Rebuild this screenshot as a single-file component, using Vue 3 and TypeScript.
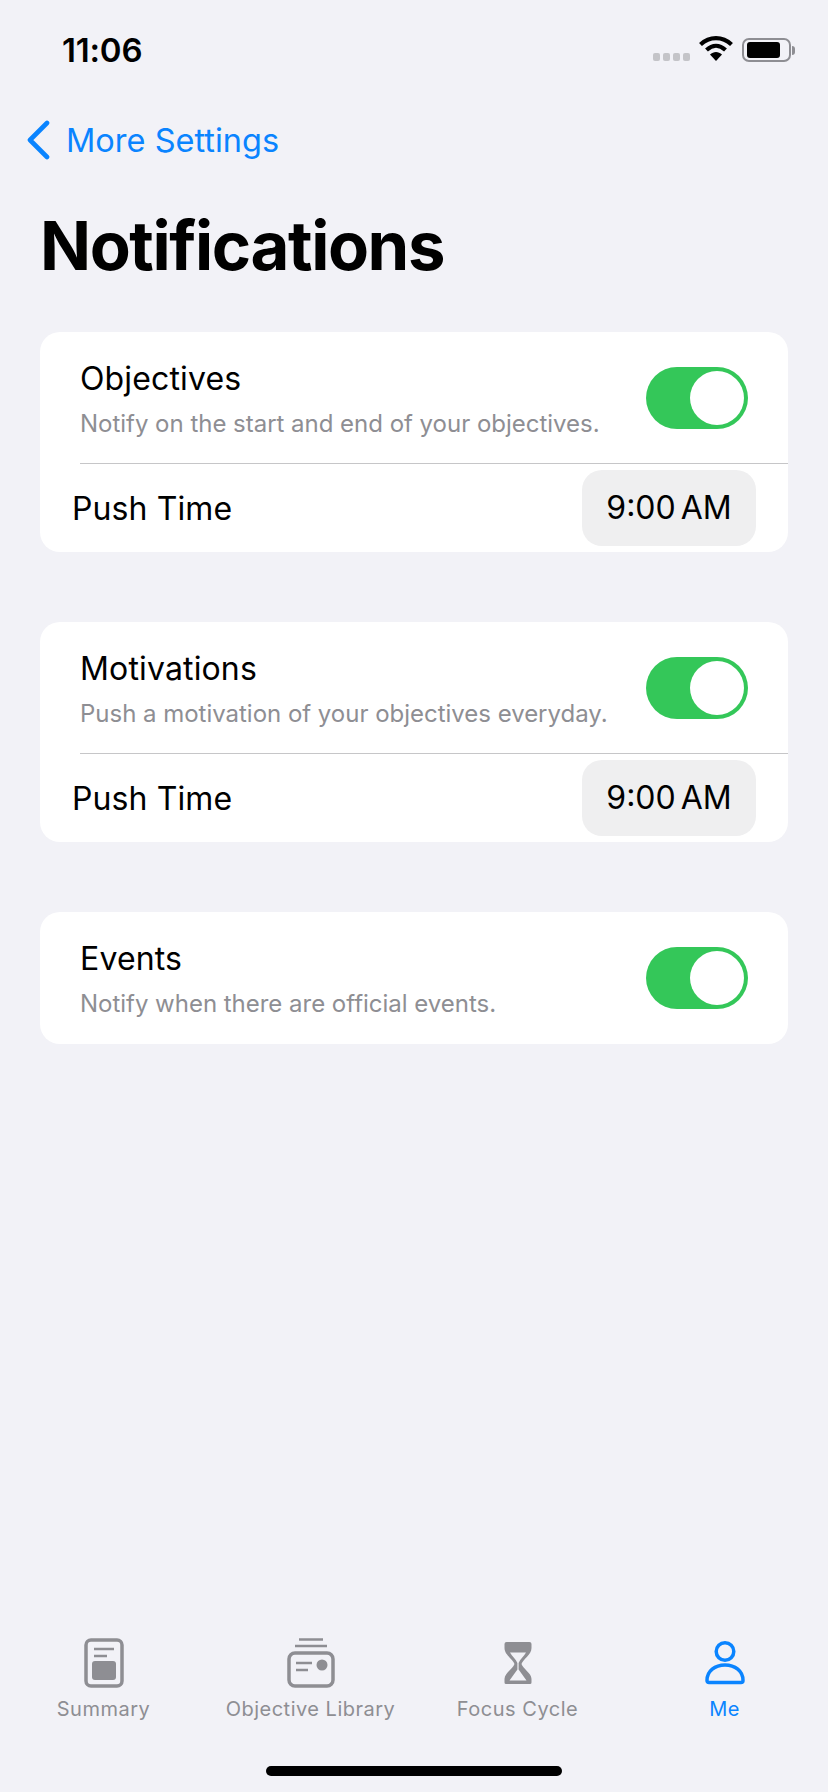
<template>
  <div class="page">
    <div class="status-bar">
      <span class="clock">11:06</span>
      <div class="status-icons">
        <div class="signal"><i v-for="n in 4" :key="n"></i></div>
        <svg class="wifi" width="34" height="26" viewBox="0 0 34 26">
          <path d="M1.5 9.5C10.5 1 23.500 1 32.500 9.500" fill="none" stroke="#000" stroke-width="4.200" />
          <path d="M7.500 15C13.500 9.500 20.500 9.500 26.500 15" fill="none" stroke="#000" stroke-width="4.200" />
          <path d="M11 19.500C14.500 16 19.500 16 23 19.500L17 26Z" fill="#000" />
        </svg>
        <div class="battery"><div class="battery-level"></div></div>
        <div class="battery-cap"></div>
      </div>
    </div>

    <nav class="nav-row">
      <svg width="26" height="40" viewBox="0 0 26 40">
        <path d="M22 3L5 20L22 37" fill="none" stroke="#0a84ff" stroke-width="4.600" stroke-linecap="round" stroke-linejoin="round" />
      </svg>
      <span class="back-label">More Settings</span>
    </nav>

    <h1 class="title">Notifications</h1>

    <section v-for="item in sections" :key="item.id" class="card">
      <div class="toggle-row">
        <div class="toggle-copy">
          <div class="row-title">{{ item.title }}</div>
          <div class="row-sub">{{ item.sub }}</div>
        </div>
        <div class="switch"><div class="knob"></div></div>
      </div>
      <template v-if="item.time">
        <div class="divider"></div>
        <div class="time-row">
          <span class="time-label">Push Time</span>
          <span class="time-pill">9:00 AM</span>
        </div>
      </template>
    </section>

    <footer class="tabs">
      <div class="tab">
        <svg width="40" height="50" viewBox="0 0 40 50">
          <rect x="2" y="2" width="36" height="46" rx="5" fill="none" stroke="#8e8e93" stroke-width="3.500" />
          <path d="M10 11H30" stroke="#8e8e93" stroke-width="2.500" />
          <path d="M10 18H23" stroke="#8e8e93" stroke-width="2.500" />
          <rect x="8" y="23" width="24" height="19" rx="3" fill="#8e8e93" />
        </svg>
        <span>Summary</span>
      </div>
      <div class="tab">
        <svg width="48" height="50" viewBox="0 0 48 50">
          <path d="M12 1.500H36" stroke="#8e8e93" stroke-width="2.500" />
          <path d="M8 8H40" stroke="#8e8e93" stroke-width="2.500" />
          <rect x="2" y="15" width="44" height="33" rx="6" fill="none" stroke="#8e8e93" stroke-width="3.500" />
          <path d="M9 25H25" stroke="#8e8e93" stroke-width="2.500" />
          <path d="M9 32H21" stroke="#8e8e93" stroke-width="2.500" />
          <circle cx="35" cy="27" r="5.500" fill="#8e8e93" />
        </svg>
        <span>Objective Library</span>
      </div>
      <div class="tab">
        <svg width="28" height="50" viewBox="0 0 28 50">
          <path fill-rule="evenodd" fill="#8e8e93" d="M0.500 6Q0.500 4 2.500 4H25.500Q27.500 4 27.500 6V10C27.500 17 19 21 17.500 26C19 31 27.500 35 27.500 41V44.500Q27.500 46 26 46H2Q0.500 46 0.500 44.500V41C0.500 35 9 31 10.500 26C9 21 0.500 17 0.500 10ZM6 14.500C8 18.500 12 21 13.400 25V31.500L5.500 42.500H22.500L14.600 31.500V25C16 21 20 18.500 22 14.500Z" />
        </svg>
        <span>Focus Cycle</span>
      </div>
      <div class="tab active">
        <svg width="42" height="50" viewBox="0 0 42 50">
          <circle cx="21" cy="13.500" r="8.800" fill="none" stroke="#0a84ff" stroke-width="3.500" />
          <path d="M3 42.500C3 33 11 27 21 27C31 27 39 33 39 42.500C39 43.800 38.300 44.500 37 44.500H5C3.700 44.500 3 43.800 3 42.500Z" fill="none" stroke="#0a84ff" stroke-width="3.500" stroke-linejoin="round" />
        </svg>
        <span>Me</span>
      </div>
    </footer>

    <div class="home-indicator"></div>
  </div>
</template>

<script setup lang="ts">
interface Section { id: string; title: string; sub: string; time: boolean }

const sections: Section[] = [
  { id: 'objectives', title: 'Objectives', sub: 'Notify on the start and end of your objectives.', time: true },
  { id: 'motivations', title: 'Motivations', sub: 'Push a motivation of your objectives everyday.', time: true },
  { id: 'events', title: 'Events', sub: 'Notify when there are official events.', time: false },
]
</script>

<style>
html, body { margin: 0; background: #f2f2f7; }
</style>

<style scoped>
.page {
  width: 828px;
  height: 1792px;
  background: #f2f2f7;
  font-family: Inter, 'Liberation Sans', sans-serif;
  color: #000;
  display: flex;
  flex-direction: column;
  overflow: hidden;
}

.status-bar {
  height: 100px;
  padding: 29px 33px 0 62px;
  box-sizing: border-box;
  display: flex;
  justify-content: space-between;
  align-items: flex-start;
}
.clock { font-size: 33px; font-weight: 600; line-height: 42px; letter-spacing: -0.2px; }
.status-icons { display: flex; align-items: center; height: 42px; }
.signal { display: flex; gap: 3px; margin-top: 14px; margin-right: 9px; }
.signal i { width: 7px; height: 8px; border-radius: 2px; background: #c4c4c8; display: block; }
.wifi { margin-right: 9px; margin-top: -4px; }
.battery {
  width: 49px;
  height: 24px;
  border: 2px solid #8e8e93;
  border-radius: 7px;
  padding: 2px 3px;
  box-sizing: border-box;
}
.battery-level { width: 33px; height: 16px; background: #000; border-radius: 3px; }
.battery-cap { width: 3px; height: 9px; margin-left: 1px; background: #8e8e93; border-radius: 0 3px 3px 0; }

.nav-row { display: flex; align-items: center; gap: 15px; padding-left: 25px; height: 40px; margin-top: 20px; }
.back-label { font-size: 32.500px; color: #0a84ff; }

.title {
  margin: 46px 0 46px 40px;
  font-size: 67px;
  line-height: 80px;
  font-weight: 700;
  letter-spacing: -1.400px;
}

.card {
  margin: 0 40px 70px;
  background: #fff;
  border-radius: 20px;
  overflow: hidden;
}
.card:last-of-type { padding-bottom: 1px; }
.toggle-row { display: flex; justify-content: space-between; align-items: center; height: 131px; padding: 0 40px; box-sizing: border-box; }
.toggle-copy { padding-top: 2px; }
.row-title { font-size: 32px; line-height: 42px; letter-spacing: 0.150px; }
.row-sub { font-size: 24px; line-height: 32px; margin-top: 8px; color: #8e8e93; letter-spacing: -0.020px; }

.switch { width: 102px; height: 62px; border-radius: 31px; background: #34c759; padding: 4px; box-sizing: border-box; display: flex; justify-content: flex-end; }
.knob { width: 54px; height: 54px; border-radius: 50%; background: #fff; }

.divider { height: 1px; margin-left: 40px; background: #c6c6c8; }
.time-row { height: 88px; display: flex; justify-content: space-between; align-items: center; padding: 0 32px 0 32px; }
.time-label { font-size: 32px; letter-spacing: 0.100px; }
.time-pill {
  width: 174px;
  height: 76px;
  border-radius: 20px;
  background: #efeff0;
  font-size: 32px;
  line-height: 76px;
  text-align: center;
  word-spacing: -4px;
  letter-spacing: 0;
}

.tabs { margin-top: auto; display: grid; grid-template-columns: repeat(4, 207px); }
.tab { display: flex; flex-direction: column; align-items: center; color: #8e8e93; font-size: 20px; line-height: 26px; letter-spacing: 0.500px; }
.tab svg { display: block; margin-bottom: 8px; }
.tab.active { color: #0a84ff; font-weight: 400; }

.home-indicator { width: 296px; height: 10px; border-radius: 5px; background: #000; margin: 44px auto 16px; }
</style>
